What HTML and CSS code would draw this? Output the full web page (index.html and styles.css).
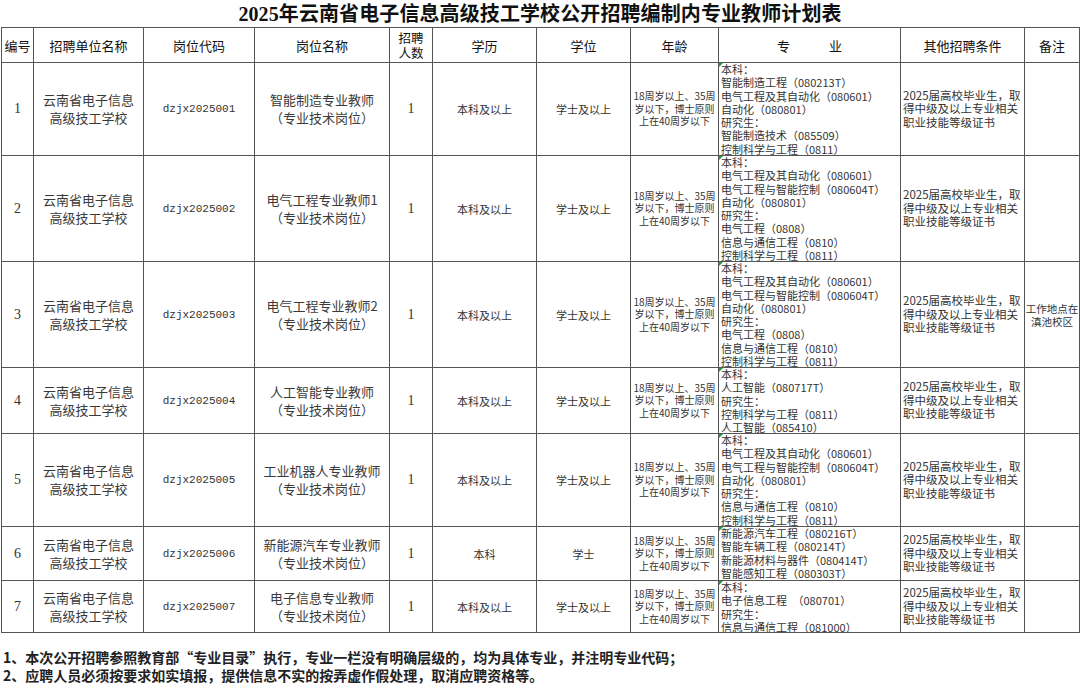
FILE: index.html
```html
<!DOCTYPE html>
<html lang="zh-CN">
<head>
<meta charset="utf-8">
<title>2025年云南省电子信息高级技工学校公开招聘编制内专业教师计划表</title>
<link rel="stylesheet" href="styles.css">
</head>
<body>
<div class="page">
  <h1 class="title">2025年云南省电子信息高级技工学校公开招聘编制内专业教师计划表</h1>
  <table class="plan">
    <colgroup>
      <col class="c-no"><col class="c-unit"><col class="c-code"><col class="c-post"><col class="c-num">
      <col class="c-edu"><col class="c-deg"><col class="c-age"><col class="c-major"><col class="c-other"><col class="c-note">
    </colgroup>
    <thead>
      <tr class="head">
        <th>编号</th><th>招聘单位名称</th><th>岗位代码</th><th>岗位名称</th><th class="two">招聘<br>人数</th>
        <th>学历</th><th>学位</th><th>年龄</th><th>专&emsp;&emsp;&emsp;业</th><th>其他招聘条件</th><th>备注</th>
      </tr>
    </thead>
    <tbody>
      <tr>
        <td class="serif">1</td>
        <td class="unit">云南省电子信息<br>高级技工学校</td>
        <td class="code">dzjx2025001</td>
        <td class="unit">智能制造专业教师<br>（专业技术岗位）</td>
        <td class="serif">1</td>
        <td class="sans">本科及以上</td>
        <td class="sans">学士及以上</td>
        <td class="age">18周岁以上、35周岁以下，博士原则上在40周岁以下</td>
        <td class="major"><div class="mj h7">本科：<br>智能制造工程（080213T）<br>电气工程及其自动化（080601）<br>自动化（080801）<br>研究生：<br>智能制造技术（085509）<br>控制科学与工程（0811）</div></td>
        <td class="other">2025届高校毕业生，取得中级及以上专业相关职业技能等级证书</td>
        <td></td>
      </tr>
      <tr>
        <td class="serif">2</td>
        <td class="unit">云南省电子信息<br>高级技工学校</td>
        <td class="code">dzjx2025002</td>
        <td class="unit">电气工程专业教师1<br>（专业技术岗位）</td>
        <td class="serif">1</td>
        <td class="sans">本科及以上</td>
        <td class="sans">学士及以上</td>
        <td class="age">18周岁以上、35周岁以下，博士原则上在40周岁以下</td>
        <td class="major"><div class="mj h8">本科：<br>电气工程及其自动化（080601）<br>电气工程与智能控制（080604T）<br>自动化（080801）<br>研究生：<br>电气工程（0808）<br>信息与通信工程（0810）<br>控制科学与工程（0811）</div></td>
        <td class="other">2025届高校毕业生，取得中级及以上专业相关职业技能等级证书</td>
        <td></td>
      </tr>
      <tr>
        <td class="serif">3</td>
        <td class="unit">云南省电子信息<br>高级技工学校</td>
        <td class="code">dzjx2025003</td>
        <td class="unit">电气工程专业教师2<br>（专业技术岗位）</td>
        <td class="serif">1</td>
        <td class="sans">本科及以上</td>
        <td class="sans">学士及以上</td>
        <td class="age">18周岁以上、35周岁以下，博士原则上在40周岁以下</td>
        <td class="major"><div class="mj h8">本科：<br>电气工程及其自动化（080601）<br>电气工程与智能控制（080604T）<br>自动化（080801）<br>研究生：<br>电气工程（0808）<br>信息与通信工程（0810）<br>控制科学与工程（0811）</div></td>
        <td class="other">2025届高校毕业生，取得中级及以上专业相关职业技能等级证书</td>
        <td class="note">工作地点在<br>滇池校区</td>
      </tr>
      <tr>
        <td class="serif">4</td>
        <td class="unit">云南省电子信息<br>高级技工学校</td>
        <td class="code">dzjx2025004</td>
        <td class="unit">人工智能专业教师<br>（专业技术岗位）</td>
        <td class="serif">1</td>
        <td class="sans">本科及以上</td>
        <td class="sans">学士及以上</td>
        <td class="age">18周岁以上、35周岁以下，博士原则上在40周岁以下</td>
        <td class="major"><div class="mj h5">本科：<br>人工智能（080717T）<br>研究生：<br>控制科学与工程（0811）<br>人工智能（085410）</div></td>
        <td class="other">2025届高校毕业生，取得中级及以上专业相关职业技能等级证书</td>
        <td></td>
      </tr>
      <tr>
        <td class="serif">5</td>
        <td class="unit">云南省电子信息<br>高级技工学校</td>
        <td class="code">dzjx2025005</td>
        <td class="unit">工业机器人专业教师<br>（专业技术岗位）</td>
        <td class="serif">1</td>
        <td class="sans">本科及以上</td>
        <td class="sans">学士及以上</td>
        <td class="age">18周岁以上、35周岁以下，博士原则上在40周岁以下</td>
        <td class="major"><div class="mj h7">本科：<br>电气工程及其自动化（080601）<br>电气工程与智能控制（080604T）<br>自动化（080801）<br>研究生：<br>信息与通信工程（0810）<br>控制科学与工程（0811）</div></td>
        <td class="other">2025届高校毕业生，取得中级及以上专业相关职业技能等级证书</td>
        <td></td>
      </tr>
      <tr>
        <td class="serif">6</td>
        <td class="unit">云南省电子信息<br>高级技工学校</td>
        <td class="code">dzjx2025006</td>
        <td class="unit">新能源汽车专业教师<br>（专业技术岗位）</td>
        <td class="serif">1</td>
        <td class="sans">本科</td>
        <td class="sans">学士</td>
        <td class="age">18周岁以上、35周岁以下，博士原则上在40周岁以下</td>
        <td class="major"><div class="mj h4">新能源汽车工程（080216T）<br>智能车辆工程（080214T）<br>新能源材料与器件（080414T）<br>智能感知工程（080303T）</div></td>
        <td class="other">2025届高校毕业生，取得中级及以上专业相关职业技能等级证书</td>
        <td></td>
      </tr>
      <tr>
        <td class="serif">7</td>
        <td class="unit">云南省电子信息<br>高级技工学校</td>
        <td class="code">dzjx2025007</td>
        <td class="unit">电子信息专业教师<br>（专业技术岗位）</td>
        <td class="serif">1</td>
        <td class="sans">本科及以上</td>
        <td class="sans">学士及以上</td>
        <td class="age">18周岁以上、35周岁以下，博士原则上在40周岁以下</td>
        <td class="major"><div class="mj h4b">本科：<br>电子信息工程&ensp;（080701）<br>研究生：<br>信息与通信工程（081000）</div></td>
        <td class="other">2025届高校毕业生，取得中级及以上专业相关职业技能等级证书</td>
        <td></td>
      </tr>
    </tbody>
  </table>
  <div class="notes">
    <p>1、本次公开招聘参照教育部“专业目录”执行，专业一栏没有明确层级的，均为具体专业，并注明专业代码；</p>
    <p>2、应聘人员必须按要求如实填报，提供信息不实的按弄虚作假处理，取消应聘资格等。</p>
  </div>
</div>
</body>
</html>
```

FILE: styles.css
```css
html, body {
  margin: 0;
  padding: 0;
  background: #ffffff;
}

.page {
  width: 1080px;
  height: 695px;
  overflow: hidden;
  font-family: "Noto Sans CJK SC", sans-serif;
  color: #222;
}

.title {
  margin: 0;
  height: 27px;
  line-height: 28px;
  text-align: center;
  font-family: "Liberation Serif", "Noto Sans CJK SC", serif;
  font-size: 20px;
  font-weight: bold;
  color: #111;
  letter-spacing: 0.1px;
}

.plan {
  margin-left: 1px;
  border-collapse: collapse;
  table-layout: fixed;
  width: 1078px;
  border-top: 1px solid #444;
}

.c-no { width: 32px; }
.c-unit { width: 110px; }
.c-code { width: 111px; }
.c-post { width: 135px; }
.c-num { width: 43px; }
.c-edu { width: 104px; }
.c-deg { width: 94px; }
.c-age { width: 88px; }
.c-major { width: 182px; }
.c-other { width: 124px; }
.c-note { width: 55px; }

.plan th,
.plan td {
  border: 1px solid #555;
  padding: 0;
  text-align: center;
  vertical-align: middle;
  overflow: hidden;
}

.head th {
  height: 34px;
  font-size: 13px;
  font-weight: normal;
  color: #111;
  line-height: 17px;
}

.head th.two {
  font-size: 12.5px;
  line-height: 15px;
}

.serif {
  font-family: "Liberation Serif", "Noto Sans CJK SC", serif;
  font-size: 14px;
  color: #333;
}

.unit {
  font-size: 13px;
  line-height: 18px;
  color: #3a3a3a;
}

.code {
  font-family: "Liberation Mono", monospace;
  font-size: 11px;
  color: #333;
}

.sans {
  font-size: 11px;
  color: #333;
}

.age {
  font-size: 10px;
  line-height: 12.5px;
  color: #333;
  padding: 0 1px !important;
}

.major {
  text-align: left !important;
  vertical-align: top !important;
  position: relative;
  padding-left: 2px !important;
}

.major::before {
  content: "";
  position: absolute;
  left: 0;
  top: 0;
  width: 0;
  height: 0;
  border-top: 4px solid #1e9b3a;
  border-right: 4px solid transparent;
}

.mj {
  font-size: 11px;
  line-height: 13.3px;
  color: #333;
  white-space: nowrap;
  overflow: hidden;
}

.h7 { height: 92px; }
.h8 { height: 105px; }
.h5 { height: 65px; }
.h4 { height: 53px; }
.h4b { height: 51px; }

.other {
  text-align: left !important;
  font-size: 11.5px;
  line-height: 13.5px;
  color: #333;
  padding-left: 2px !important;
}

.note {
  font-size: 10.5px;
  line-height: 13px;
  color: #333;
}

.notes {
  padding: 15px 0 0 3px;
}

.notes p {
  margin: 0;
  font-family: "Noto Sans CJK SC", sans-serif;
  font-size: 14px;
  line-height: 18px;
  font-weight: bold;
  color: #222;
  white-space: nowrap;
}
```
